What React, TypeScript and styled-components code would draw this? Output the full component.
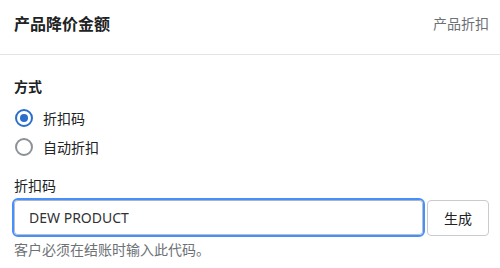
import React, { useState } from "react";
import styled, { createGlobalStyle } from "styled-components";

const GlobalStyle = createGlobalStyle`
  html, body {
    margin: 0;
    padding: 0;
    background: #ffffff;
  }
  body {
    font-family: "Noto Sans", "Noto Sans CJK SC", sans-serif;
    color: #202223;
  }
`;

const Card = styled.div`
  width: 500px;
  height: 268px;
  background: #ffffff;
  box-sizing: border-box;
`;

const Header = styled.div`
  height: 55px;
  box-sizing: border-box;
  display: flex;
  align-items: center;
  justify-content: space-between;
  padding: 0 11px 6px 14px;
  border-bottom: 1px solid #e1e3e5;
`;

const Title = styled.h2`
  margin: 0;
  font-size: 16px;
  font-weight: 700;
  line-height: 20px;
  color: #202223;
`;

const Subdued = styled.span`
  font-size: 14px;
  line-height: 20px;
  color: #6d7175;
`;

const Body = styled.div`
  padding: 22px 11px 0 14px;
  display: flex;
  flex-direction: column;
`;

const SectionLabel = styled.div`
  font-size: 14px;
  font-weight: 700;
  line-height: 20px;
  margin-bottom: 11px;
`;

const RadioList = styled.div`
  display: flex;
  flex-direction: column;
  gap: 9px;
`;

const RadioRow = styled.label`
  display: flex;
  align-items: center;
  gap: 10px;
  height: 20px;
  font-size: 14px;
  cursor: pointer;
  margin-left: 1px;
`;

const RadioDot = styled.span<{ checked: boolean }>`
  width: 18px;
  height: 18px;
  box-sizing: border-box;
  border-radius: 50%;
  border: 2px solid ${({ checked }) => (checked ? "#2c6ecb" : "#8c9196")};
  display: flex;
  align-items: center;
  justify-content: center;

  &::after {
    content: "";
    width: 8px;
    height: 8px;
    border-radius: 50%;
    background: #2c6ecb;
    display: ${({ checked }) => (checked ? "block" : "none")};
  }
`;

const FieldLabel = styled.div`
  font-size: 14px;
  line-height: 20px;
  margin-top: 19px;
  margin-bottom: 2px;
`;

const FieldRow = styled.div`
  display: flex;
  align-items: center;
  gap: 2px;
`;

const InputWrap = styled.div`
  flex: 1;
  margin-left: -2px;
  border: 2px solid #458fff;
  border-radius: 6px;
  display: flex;
`;

const Input = styled.input`
  flex: 1;
  height: 35px;
  box-sizing: border-box;
  border: 1px solid #babfc3;
  border-top-color: #aeb4b9;
  border-radius: 4px;
  padding: 0 12px 0 14px;
  font-family: "Noto Sans", "Noto Sans CJK SC", sans-serif;
  font-size: 14px;
  color: #303236;
  outline: none;
`;

const Button = styled.button`
  width: 62px;
  height: 36px;
  box-sizing: border-box;
  border: 1px solid #c9cccf;
  border-radius: 4px;
  background: #ffffff;
  font-family: "Noto Sans", "Noto Sans CJK SC", sans-serif;
  font-size: 14px;
  color: #202223;
  cursor: pointer;
`;

const HelpText = styled.div`
  font-size: 14px;
  line-height: 20px;
  color: #6d7175;
  margin-top: 3px;
`;

export default function App() {
  const [method, setMethod] = useState("code");
  const [code, setCode] = useState("DEW PRODUCT");

  return (
    <>
      <GlobalStyle />
      <Card>
        <Header>
          <Title>产品降价金额</Title>
          <Subdued>产品折扣</Subdued>
        </Header>
        <Body>
          <SectionLabel>方式</SectionLabel>
          <RadioList>
            <RadioRow onClick={() => setMethod("code")}>
              <RadioDot checked={method === "code"} />
              折扣码
            </RadioRow>
            <RadioRow onClick={() => setMethod("auto")}>
              <RadioDot checked={method === "auto"} />
              自动折扣
            </RadioRow>
          </RadioList>
          <FieldLabel>折扣码</FieldLabel>
          <FieldRow>
            <InputWrap>
              <Input value={code} onChange={(e) => setCode(e.target.value)} />
            </InputWrap>
            <Button>生成</Button>
          </FieldRow>
          <HelpText>客户必须在结账时输入此代码。</HelpText>
        </Body>
      </Card>
    </>
  );
}
